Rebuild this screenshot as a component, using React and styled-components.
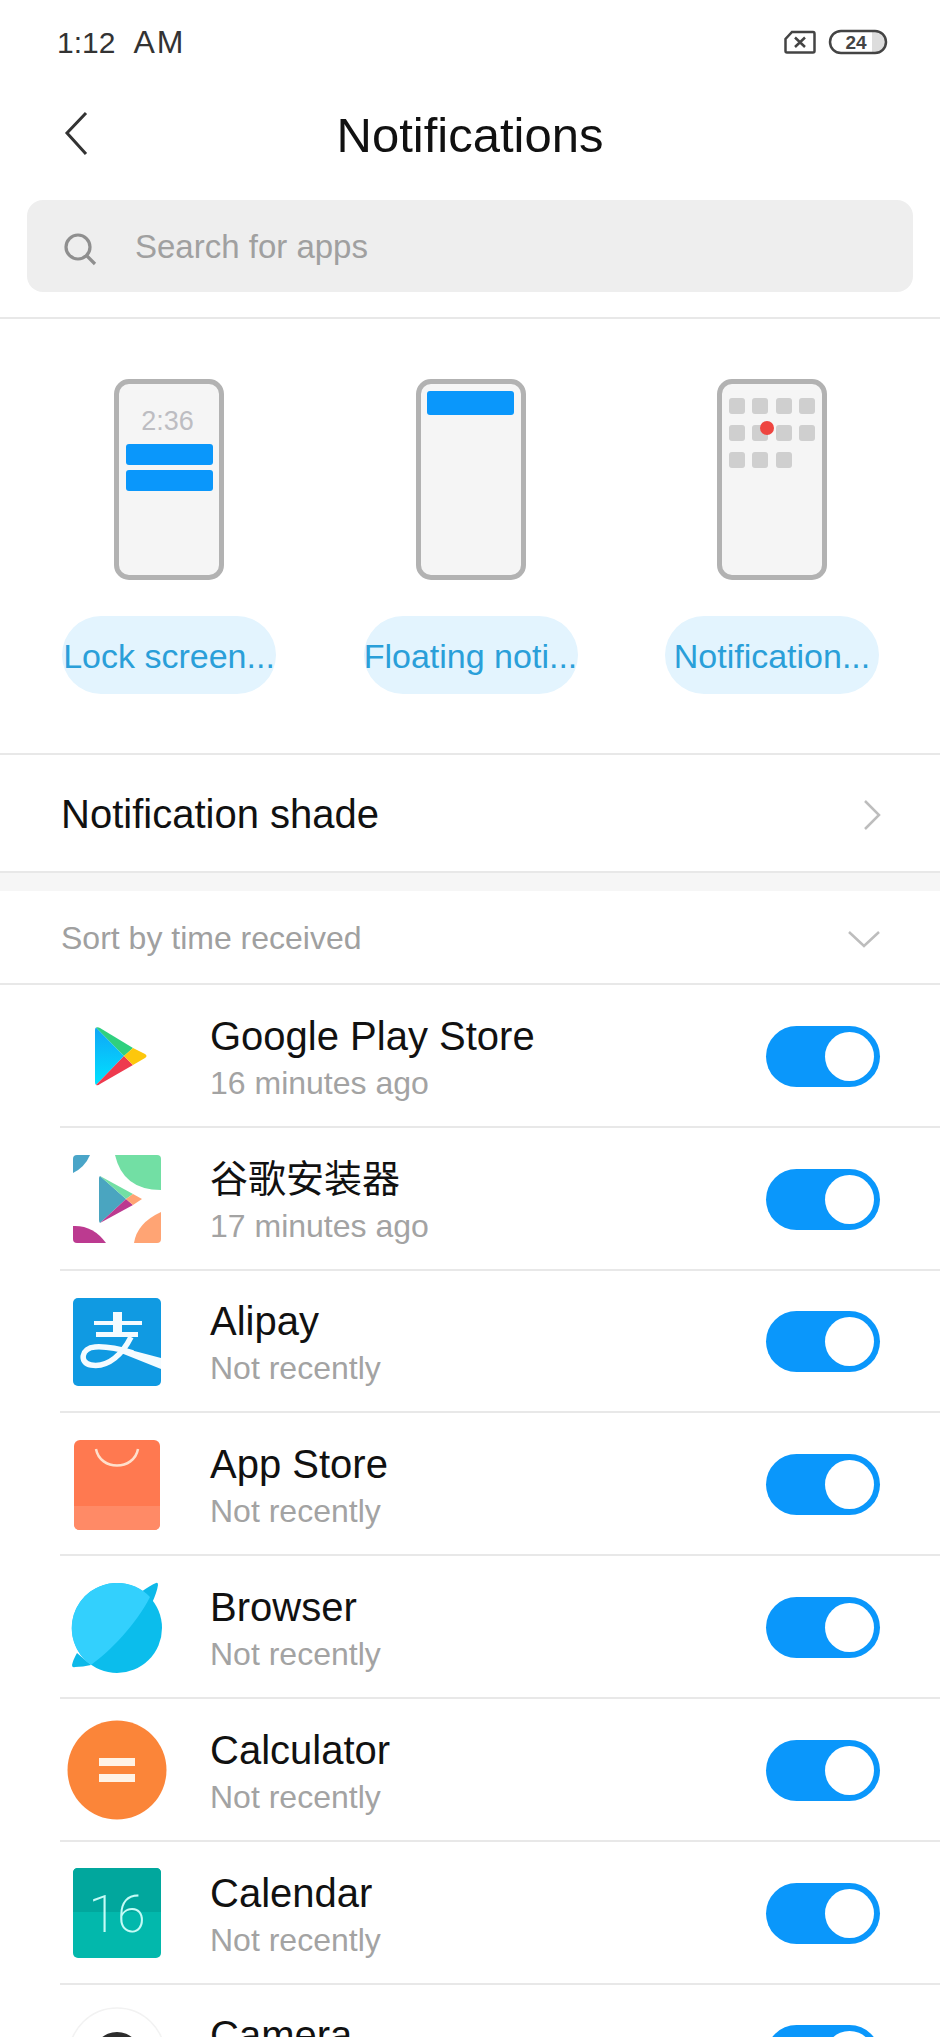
import React from 'react'
import styled, { createGlobalStyle } from 'styled-components'

const FONT = `"Liberation Sans", "Noto Sans CJK SC", sans-serif`

const GlobalStyle = createGlobalStyle`
  html, body {
    margin: 0;
    padding: 0;
    background: #fff;
    font-family: ${FONT};
  }
`

const Screen = styled.div`
  width: 940px;
  height: 2037px;
  overflow: hidden;
  background: #fff;
  color: #111;
`

const StatusBar = styled.div`
  height: 86px;
  box-sizing: border-box;
  padding: 25px 52px 0 57px;
  display: flex;
  justify-content: space-between;
  align-items: flex-start;
  font-size: 30px;
  line-height: 34px;
  color: #333;
`

const Meridiem = styled.span`
  margin-left: 18px;
  font-size: 32px;
  letter-spacing: 2px;
`

const StatusIcons = styled.div`
  display: flex;
  align-items: center;
  gap: 12px;
  padding-top: 4px;
`

const TitleBar = styled.div`
  height: 96px;
  display: flex;
  align-items: center;
  justify-content: center;
  position: relative;
`

const Back = styled.svg`
  position: absolute;
  left: 62px;
  top: 25px;
`

const Title = styled.h1`
  margin: 0;
  padding-top: 2px;
  font-size: 49px;
  font-weight: 400;
  color: #111;
`

const SearchBox = styled.div`
  margin: 18px 27px 0;
  height: 92px;
  border-radius: 16px;
  background: #eeeeee;
  display: flex;
  align-items: center;
  padding-left: 36px;
  gap: 38px;
  font-size: 33px;
  color: #a0a0a0;
`

const SearchIcon = styled.svg`
  margin-top: 6px;
`

const SearchLabel = styled.span`
  padding-top: 2px;
`

const Divider = styled.div`
  height: 2px;
  background: #e8e8e8;
  margin-top: ${p => p.$gap || 0}px;
  margin-left: ${p => p.$inset || 0}px;
`

const Modes = styled.div`
  margin-top: 25px;
  padding: 35px 61px 0 62px;
  height: 409px;
  box-sizing: border-box;
  display: flex;
  justify-content: space-between;
`

const Mode = styled.div`
  width: 214px;
  display: flex;
  flex-direction: column;
  align-items: center;
`

const Phone = styled.div`
  width: 110px;
  height: 201px;
  box-sizing: border-box;
  border: 5px solid #b2b2b2;
  border-radius: 15px;
  background: #f5f5f5;
  display: flex;
  flex-direction: column;
  align-items: center;
  padding-top: ${p => p.$top}px;
  position: relative;
`

const Clock = styled.div`
  font-size: 27px;
  line-height: 28px;
  color: #bdbdc2;
  margin: 0 0 9px -3px;
`

const Banner = styled.div`
  width: 87px;
  height: ${p => p.$h}px;
  background: #0a97fb;
  border-radius: 3px;
  margin-bottom: 5px;
`

const IconGrid = styled.div`
  display: grid;
  grid-template-columns: repeat(4, 16px);
  grid-auto-rows: 16px;
  column-gap: 7.5px;
  row-gap: 11px;
`

const GridCell = styled.div`
  background: #cfcfcf;
  border-radius: 3px;
`

const RedDot = styled.div`
  position: absolute;
  left: 38px;
  top: 37px;
  width: 14px;
  height: 14px;
  border-radius: 50%;
  background: #ee4540;
`

const Pill = styled.div`
  margin-top: 36px;
  width: 214px;
  height: 78px;
  box-sizing: border-box;
  padding-top: 2px;
  border-radius: 39px;
  background: #e3f4fe;
  color: #2a9fd9;
  font-size: 34px;
  display: flex;
  align-items: center;
  justify-content: center;
  white-space: nowrap;
`

const ShadeRow = styled.div`
  height: 116px;
  box-sizing: border-box;
  padding: 3px 58px 0 61px;
  display: flex;
  align-items: center;
  justify-content: space-between;
  font-size: 40px;
  color: #111;
`

const Band = styled.div`
  height: 18px;
  background: #f6f6f6;
`

const SortRow = styled.div`
  height: 92px;
  box-sizing: border-box;
  padding: 3px 59px 0 61px;
  display: flex;
  align-items: center;
  justify-content: space-between;
  font-size: 32px;
  color: #a0a0a0;
`

const AppItem = styled.div`
  height: 140.8px;
  box-sizing: border-box;
  padding: 2px 60px 0 60px;
  display: flex;
  align-items: center;
`

const IconSlot = styled.div`
  width: 114px;
  height: 100px;
  margin-right: 36px;
  flex: none;
  display: flex;
  align-items: center;
  justify-content: center;
`

const AppText = styled.div`
  flex: 1;
  min-width: 0;
  padding-top: 4px;
`

const AppName = styled.div`
  font-size: ${p => p.$size || 40}px;
  line-height: 46px;
  color: #111;
`

const AppTime = styled.div`
  margin-top: 3px;
  font-size: 32px;
  line-height: 42px;
  color: #a3a3a3;
`

const Toggle = styled.div`
  width: 114px;
  height: 61px;
  flex: none;
  border-radius: 31px;
  background: #0a97fb;
  display: flex;
  align-items: center;
  justify-content: flex-end;
  padding-right: 6px;
  box-sizing: border-box;
`

const Knob = styled.div`
  width: 49px;
  height: 49px;
  border-radius: 50%;
  background: #fff;
`

const PlayIcon = () => (
  <svg width="88" height="88" viewBox="0 0 88 88">
    <defs>
      <linearGradient id="playBlue" x1="0" y1="0" x2="0" y2="1">
        <stop offset="0" stopColor="#10a6f6" />
        <stop offset="1" stopColor="#00e2ff" />
      </linearGradient>
    </defs>
    <path d="M23 15.5 L51 44 L23 73 Q22 72 22 70 V18 Q22 16 23 15.5Z" fill="url(#playBlue)" />
    <path d="M23 15.5 Q25 15 27 16 L60 36 L51 44Z" fill="#2fd07f" />
    <path d="M23 73 Q25 74 27 72 L60 53 L51 44Z" fill="#ee3a4e" />
    <path d="M60 36 L72 42 Q75 44 72 46 L60 53 L51 44Z" fill="#fdc70c" />
  </svg>
)

const InstallerIcon = () => (
  <svg width="88" height="88" viewBox="0 0 88 88">
    <path d="M0 4 Q0 0 4 0 H17 Q12 12 0 18Z" fill="#4aa5c8" />
    <path d="M42 0 H84 Q88 0 88 4 V35 Q50 35 42 0Z" fill="#72dfa4" />
    <path d="M0 71 Q20 70 33 88 H4 Q0 88 0 84Z" fill="#bc3a90" />
    <path d="M88 57 V84 Q88 88 84 88 H61 Q64 68 88 57Z" fill="#ffa474" />
    <path d="M27 21 L53 44 L27 68 Q26 67 26 65 V23 Q26 22 27 21Z" fill="#4aa5c0" />
    <path d="M27 21 L60 39 L53 44Z" fill="#72dfa4" />
    <path d="M27 68 L60 50 L53 44Z" fill="#bc3a90" />
    <path d="M60 39 L69 44 L60 50 L53 44Z" fill="#ffa474" />
  </svg>
)

const AlipayIcon = () => (
  <svg width="88" height="88" viewBox="0 0 88 88">
    <rect width="88" height="88" rx="5" fill="#109ae2" />
    <g fill="none" stroke="#f4fbff" strokeLinecap="butt">
      <path d="M21 25 H69" strokeWidth="4" />
      <path d="M44.5 14 V36" strokeWidth="9" />
      <path d="M23 36.5 H65" strokeWidth="5" />
      <path d="M58 39 C50 55 36 70 18 67 C6 65 8 50 22 49 C36 48 50 52 60 55" strokeWidth="5.5" />
    </g>
    <path d="M50 50 L88 60 V71 L48 55Z" fill="#f4fbff" />
  </svg>
)

const StoreIcon = () => (
  <svg width="86" height="90" viewBox="0 0 86 90">
    <rect width="86" height="90" rx="6" fill="#ff7950" />
    <path d="M0 66 H86 V84 Q86 90 80 90 H6 Q0 90 0 84Z" fill="#ff8a66" />
    <path d="M22 9 C26 31 60 31 64 9" fill="none" stroke="#ffe0cc" strokeWidth="2.5" />
  </svg>
)

const BrowserIcon = () => (
  <svg width="92" height="92" viewBox="0 0 92 92">
    <path d="M70 10 Q80 3 85 1 Q87 0 87 3 Q86 10 81 21Z" fill="#0db9e9" />
    <path d="M6 71 Q2 78 1 83 Q1 86 4 85 Q12 85 20 83Z" fill="#0db9e9" />
    <circle cx="46" cy="46" r="45" fill="#0bbdec" />
    <path d="M46 1 A45 45 0 0 1 79 15 C64 44 40 68 20 83 A45 45 0 0 1 46 1Z" fill="#33d0fd" />
  </svg>
)

const CalculatorIcon = () => (
  <svg width="100" height="100" viewBox="0 0 100 100">
    <circle cx="50" cy="50" r="49.5" fill="#fb8539" />
    <rect x="32" y="38" width="36" height="8" fill="#fff3e6" />
    <rect x="32" y="54" width="36" height="8" fill="#fff3e6" />
  </svg>
)

const CalendarIcon = () => (
  <svg width="88" height="90" viewBox="0 0 88 90">
    <rect width="88" height="90" rx="5" fill="#02b8ac" />
    <path d="M0 44 V5 Q0 0 5 0 H83 Q88 0 88 5 V44Z" fill="#01a79d" />
    <text x="44" y="64" textAnchor="middle" fontFamily="Roboto, sans-serif" fontWeight="200" fontSize="52" fill="#c5fbf6">16</text>
  </svg>
)

const CameraIcon = () => (
  <svg width="100" height="100" viewBox="0 0 100 100">
    <circle cx="50" cy="50" r="48" fill="#fff" stroke="#f2f2f2" strokeWidth="1.5" />
    <circle cx="50" cy="50" r="24" fill="#2c2c2c" />
  </svg>
)

const apps = [
  { name: 'Google Play Store', time: '16 minutes ago', Icon: PlayIcon },
  { name: '谷歌安装器', size: 38, time: '17 minutes ago', Icon: InstallerIcon },
  { name: 'Alipay', time: 'Not recently', Icon: AlipayIcon },
  { name: 'App Store', time: 'Not recently', Icon: StoreIcon },
  { name: 'Browser', time: 'Not recently', Icon: BrowserIcon },
  { name: 'Calculator', time: 'Not recently', Icon: CalculatorIcon },
  { name: 'Calendar', time: 'Not recently', Icon: CalendarIcon },
  { name: 'Camera', time: 'Not recently', Icon: CameraIcon },
]

export default function App() {
  return (
    <Screen>
      <GlobalStyle />
      <StatusBar>
        <span>1:12<Meridiem>AM</Meridiem></span>
        <StatusIcons>
          <svg width="32" height="24" viewBox="0 0 32 24" fill="none" stroke="#444" strokeWidth="2.5">
            <path d="M8 2 H29 Q30.5 2 30.5 4 V21 Q30.5 22.5 29 22.5 H3 Q1.5 22.5 1.5 21 V9Z" />
            <path d="M11 7.5 L21 17 M21 7.5 L11 17" />
          </svg>
          <svg width="60" height="26" viewBox="0 0 60 26">
            <path d="M44 3 H46 Q57 3 57 13 Q57 23 46 23 H44Z" fill="#ddd" />
            <rect x="2" y="2" width="56" height="22" rx="11" fill="none" stroke="#444" strokeWidth="2.5" />
            <text x="28" y="20" textAnchor="middle" fontFamily="Liberation Sans, sans-serif" fontWeight="700" fontSize="19" fill="#444">24</text>
          </svg>
        </StatusIcons>
      </StatusBar>
      <TitleBar>
        <Back width="26" height="46" viewBox="0 0 26 46" fill="none" stroke="#333" strokeWidth="3">
          <path d="M24 2 L5 22 L24 43" />
        </Back>
        <Title>Notifications</Title>
      </TitleBar>
      <SearchBox>
        <SearchIcon width="34" height="34" viewBox="0 0 34 34" fill="none" stroke="#8f8f8f" strokeWidth="3.2">
          <circle cx="15" cy="15" r="12" />
          <path d="M23.5 23.5 L32 32" />
        </SearchIcon>
        <SearchLabel>Search for apps</SearchLabel>
      </SearchBox>
      <Divider $gap={25} />
      <Modes>
        <Mode>
          <Phone $top={23}>
            <Clock>2:36</Clock>
            <Banner $h={21} />
            <Banner $h={21} />
          </Phone>
          <Pill>Lock screen...</Pill>
        </Mode>
        <Mode>
          <Phone $top={7}>
            <Banner $h={24} />
          </Phone>
          <Pill>Floating noti...</Pill>
        </Mode>
        <Mode>
          <Phone $top={14}>
            <IconGrid>
              {Array.from({ length: 11 }, (_, i) => <GridCell key={i} />)}
            </IconGrid>
            <RedDot />
          </Phone>
          <Pill>Notification...</Pill>
        </Mode>
      </Modes>
      <Divider />
      <ShadeRow>
        Notification shade
        <svg width="20" height="32" viewBox="0 0 20 32" fill="none" stroke="#bdbdbd" strokeWidth="2.5">
          <path d="M3 2 L17 16 L3 30" />
        </svg>
      </ShadeRow>
      <Divider />
      <Band />
      <SortRow>
        Sort by time received
        <svg width="34" height="20" viewBox="0 0 34 20" fill="none" stroke="#bdbdbd" strokeWidth="2.5">
          <path d="M2 3 L17 17 L32 3" />
        </svg>
      </SortRow>
      <Divider />
      {apps.map(({ name, size, time, Icon }, i) => (
        <React.Fragment key={name}>
          {i > 0 && <Divider $inset={60} />}
          <AppItem>
            <IconSlot><Icon /></IconSlot>
            <AppText>
              <AppName $size={size}>{name}</AppName>
              <AppTime>{time}</AppTime>
            </AppText>
            <Toggle><Knob /></Toggle>
          </AppItem>
        </React.Fragment>
      ))}
    </Screen>
  )
}
